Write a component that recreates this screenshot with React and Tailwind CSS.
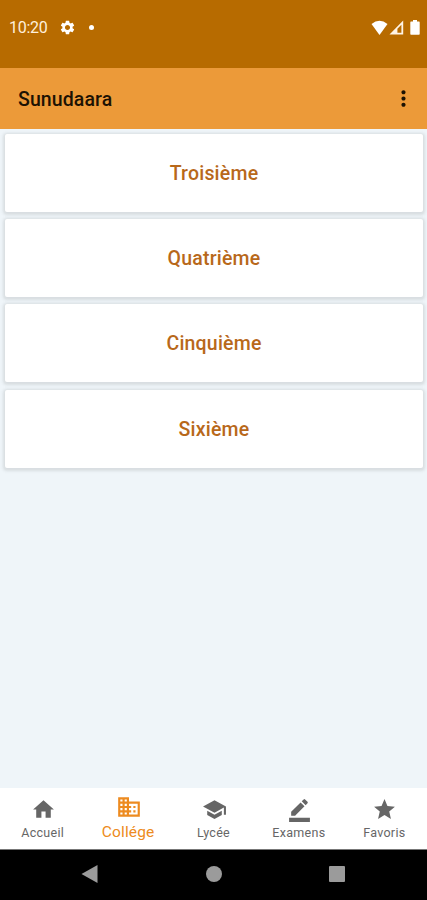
import React from 'react';
import {
  MdHome,
  MdBusiness,
  MdSchool,
  MdBorderColor,
  MdStar,
  MdSettings,
  MdMoreVert,
} from 'react-icons/md';

const levels = ['Troisième', 'Quatrième', 'Cinquième', 'Sixième'];

const tabs = [
  { label: 'Accueil', icon: MdHome },
  { label: 'Collége', icon: MdBusiness, active: true },
  { label: 'Lycée', icon: MdSchool },
  { label: 'Examens', icon: MdBorderColor },
  { label: 'Favoris', icon: MdStar },
];

function StatusBar() {
  return (
    <div className="flex h-[68px] items-start justify-between bg-[#b76b00] pl-[9px] pr-[7px] pt-[18px] text-[#fff0dc]">
      <div className="flex h-[18px] items-center">
        <span className="w-[50px] pt-[2px] text-[16px] leading-5 tracking-[-0.3px]">10:20</span>
        <MdSettings className="h-[17px] w-[17px] text-white" />
        <span className="ml-[13px] h-[5px] w-[5px] rounded-full bg-white" />
      </div>
      <div className="flex h-[18px] items-center">
        <svg className="h-[15px] w-[17px]" viewBox="0 0 17 15" fill="#fff">
          <path d="M8.5 15L0.5 4Q8.5-2.4 16.5 4Z" />
        </svg>
        <svg className="ml-px h-[15px] w-[15px]" viewBox="0 0 15 15" fill="#fff4e6">
          <path fillRule="evenodd" d="M0.5 14.6L14.2 0.6V14.6ZM8.4 8.8V12.8H12.4V4.8Z" />
        </svg>
        <svg className="ml-[6px] h-[15px] w-[10px]" viewBox="0 0 10 15" fill="#fff">
          <path d="M3 0H7V1.6H9Q9.7 1.6 9.7 2.4V14Q9.7 14.8 9 14.8H1Q0.3 14.8 0.3 14V2.4Q0.3 1.6 1 1.6H3Z" />
        </svg>
      </div>
    </div>
  );
}

function AppBar() {
  return (
    <div className="flex h-[61px] items-center justify-between bg-[#ec9a39] pl-[18px] pr-[11px]">
      <h1 className="pt-[2px] text-[19.5px] font-medium leading-6 tracking-[0.1px] text-[#1c1203]">Sunudaara</h1>
      <button title="Menu">
        <MdMoreVert className="h-[25px] w-[25px] text-[#1c1203]" />
      </button>
    </div>
  );
}

function LevelCard({ name }) {
  return (
    <div className="flex h-[78px] shrink-0 items-center justify-center rounded-[2px] bg-white pt-[2px] shadow-[0_1px_3px_2px_rgba(100,100,100,0.16)]">
      <span className="text-[19.5px] font-medium leading-6 tracking-[0.2px] text-[#b8681a]">{name}</span>
    </div>
  );
}

function TabItem({ label, icon: Icon, active }) {
  if (active) {
    return (
      <button className="flex flex-1 flex-col items-center pt-[6px] text-[#ed8b20]">
        <Icon className="ml-px h-[26px] w-[26px]" />
        <span className="mt-[2px] text-[15.5px] leading-[20px] tracking-[0.15px]">{label}</span>
      </button>
    );
  }
  return (
    <button className="flex flex-1 flex-col items-center pt-[9px] text-[#666]">
      <Icon className="ml-px h-[25px] w-[25px]" />
      <span className="mt-[3px] text-[12.5px] leading-[16px] tracking-[0.3px]">{label}</span>
    </button>
  );
}

export default function App() {
  return (
    <div className="flex h-screen w-full flex-col overflow-hidden bg-[#eff5f9] font-['Roboto',sans-serif]">
      <StatusBar />
      <AppBar />

      {/* Liste des classes */}
      <main className="flex flex-1 flex-col gap-[7.2px] pl-[5px] pr-[4px] pt-[5px]">
        {levels.map((name) => (
          <LevelCard key={name} name={name} />
        ))}
      </main>

      {/* Navigation principale */}
      <nav className="flex h-[61px] bg-white">
        {tabs.map((tab) => (
          <TabItem key={tab.label} {...tab} />
        ))}
      </nav>

      {/* Boutons système */}
      <div className="flex h-[51px] items-center justify-between border-t border-[#777] bg-black pb-[2px] pl-[81px] pr-[82px]">
        <svg className="h-[18px] w-[17px]" viewBox="0 0 17 18" fill="#9b9b9b">
          <path d="M0.5 9L16.5 0V18Z" />
        </svg>
        <span className="h-4 w-4 rounded-full bg-[#9b9b9b]" />
        <span className="h-4 w-4 rounded-[1px] bg-[#9b9b9b]" />
      </div>
    </div>
  );
}
